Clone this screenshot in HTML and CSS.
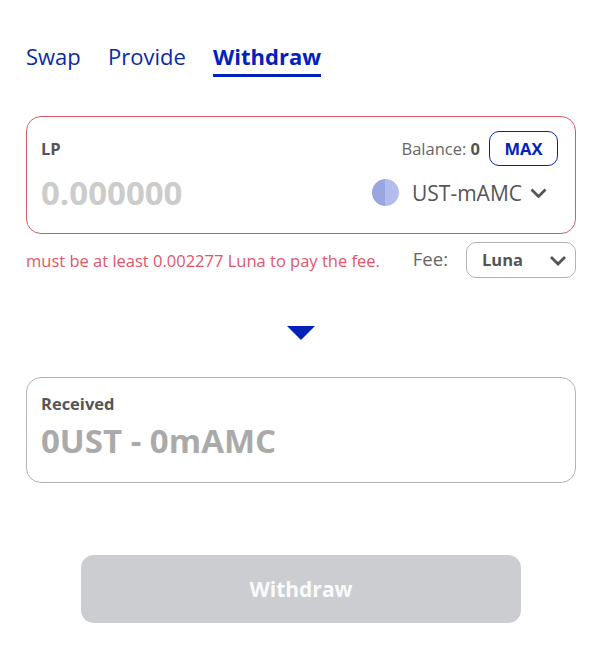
FILE: index.html
```html
<!DOCTYPE html>
<html lang="en">
  <head>
    <meta charset="UTF-8" />
    <title>Withdraw</title>
    <link rel="stylesheet" href="styles.css">
  </head>
  <body>
    <div class="tabs">
      <a class="tab">Swap</a>
      <a class="tab">Provide</a>
      <a class="tab active">Withdraw</a>
    </div>

    <div class="box error">
      <div class="box-top">
        <span class="label">LP</span>
        <div class="balance">
          <span>Balance: <b>0</b></span>
          <button class="max">MAX</button>
        </div>
      </div>
      <div class="box-main">
        <span class="amount">0.000000</span>
        <div class="token">
          <span class="token-icon"></span>
          <span>UST-mAMC</span>
          <svg class="chevron" width="17" height="10" viewBox="0 0 17 10">
            <path d="M1.5 1.5l7 7 7-7" fill="none" stroke="#555" stroke-width="2.8" />
          </svg>
        </div>
      </div>
    </div>

    <div class="fee-row">
      <p class="error-text">must be at least 0.002277 Luna to pay the fee.</p>
      <div class="fee">
        <span class="fee-label">Fee:</span>
        <div class="select">
          <span class="select-value">Luna</span>
          <svg width="18" height="11" viewBox="0 0 18 11">
            <path d="M2 2l7 7 7-7" fill="none" stroke="#555" stroke-width="2.8" />
          </svg>
        </div>
      </div>
    </div>

    <div class="arrow"></div>

    <div class="box received">
      <span class="label">Received</span>
      <div class="received-value">0UST - 0mAMC</div>
    </div>

    <button class="submit" disabled>Withdraw</button>
  </body>
</html>
```

FILE: styles.css
```css
* {
  margin: 0;
  padding: 0;
  box-sizing: border-box;
}

body {
  font-family: "Open Sans", sans-serif;
  background: #fff;
  color: #555;
  padding: 41px 26px 0;
}

.tabs {
  display: flex;
  gap: 27.2px;
}

.tab {
  font-size: 22px;
  line-height: 30px;
  padding-bottom: 3px;
  color: #0a2aa8;
}

.tab.active {
  font-weight: 700;
  color: #0222ba;
  border-bottom: 3px solid #0222ba;
}

.box {
  border: 1px solid #b3b3b3;
  border-radius: 15px;
  background: #fff;
}

.box.error {
  margin-top: 39px;
  height: 118px;
  padding: 14px 17px 0 14px;
  border-color: #d45c68;
}

.box-top {
  display: flex;
  justify-content: space-between;
  align-items: center;
}

.label {
  font-size: 16.5px;
  font-weight: 700;
  color: #555;
}

.balance {
  display: flex;
  align-items: center;
  gap: 9px;
  font-size: 16.5px;
  color: #666;
}

.balance b {
  color: #555;
}

.max {
  width: 69px;
  height: 35px;
  font-family: inherit;
  font-size: 16.5px;
  font-weight: 700;
  color: #0222ba;
  background: #fff;
  border: 1px solid #0222ba;
  border-radius: 10px;
}

.box-main {
  display: flex;
  justify-content: space-between;
  align-items: center;
  margin-top: 4px;
  padding-right: 11px;
}

.amount {
  font-size: 33px;
  font-weight: 700;
  color: #ccc;
}

.token {
  display: flex;
  align-items: center;
  font-size: 21px;
  color: #555;
}

.token-icon {
  width: 27px;
  height: 27px;
  margin-right: 13px;
  border-radius: 50%;
  background: linear-gradient(90deg, #9aa6e2 50%, #b3bdec 50%);
}

.chevron {
  margin-left: 8px;
}

.fee-row {
  display: flex;
  justify-content: space-between;
  align-items: center;
  margin-top: 8px;
}

.error-text {
  font-size: 16.5px;
  color: #e0566a;
}

.fee {
  display: flex;
  align-items: center;
  gap: 18px;
}

.fee-label {
  margin-bottom: 4px;
  font-size: 18.5px;
  color: #666;
}

.select {
  display: flex;
  justify-content: space-between;
  align-items: center;
  width: 110px;
  height: 36px;
  padding: 0 8px 0 15px;
  font-size: 16.5px;
  font-weight: 700;
  color: #555;
  border: 1px solid #b3b3b3;
  border-radius: 10px;
}

.select-value {
  margin-bottom: 2px;
}

.arrow {
  width: 0;
  height: 0;
  margin: 48px auto 0;
  border-left: 14px solid transparent;
  border-right: 14px solid transparent;
  border-top: 14px solid #0222ba;
}

.box.received {
  margin-top: 37px;
  height: 106px;
  padding: 14px 14px 0;
}

.received-value {
  margin-top: 3px;
  font-size: 33px;
  line-height: 45px;
  font-weight: 700;
  color: #aaa;
}

.submit {
  display: block;
  width: 440px;
  height: 68px;
  margin: 72px auto 0;
  font-family: inherit;
  font-size: 21px;
  font-weight: 700;
  color: #fafafa;
  background: #cbcdd1;
  border: none;
  border-radius: 13px;
}
```
